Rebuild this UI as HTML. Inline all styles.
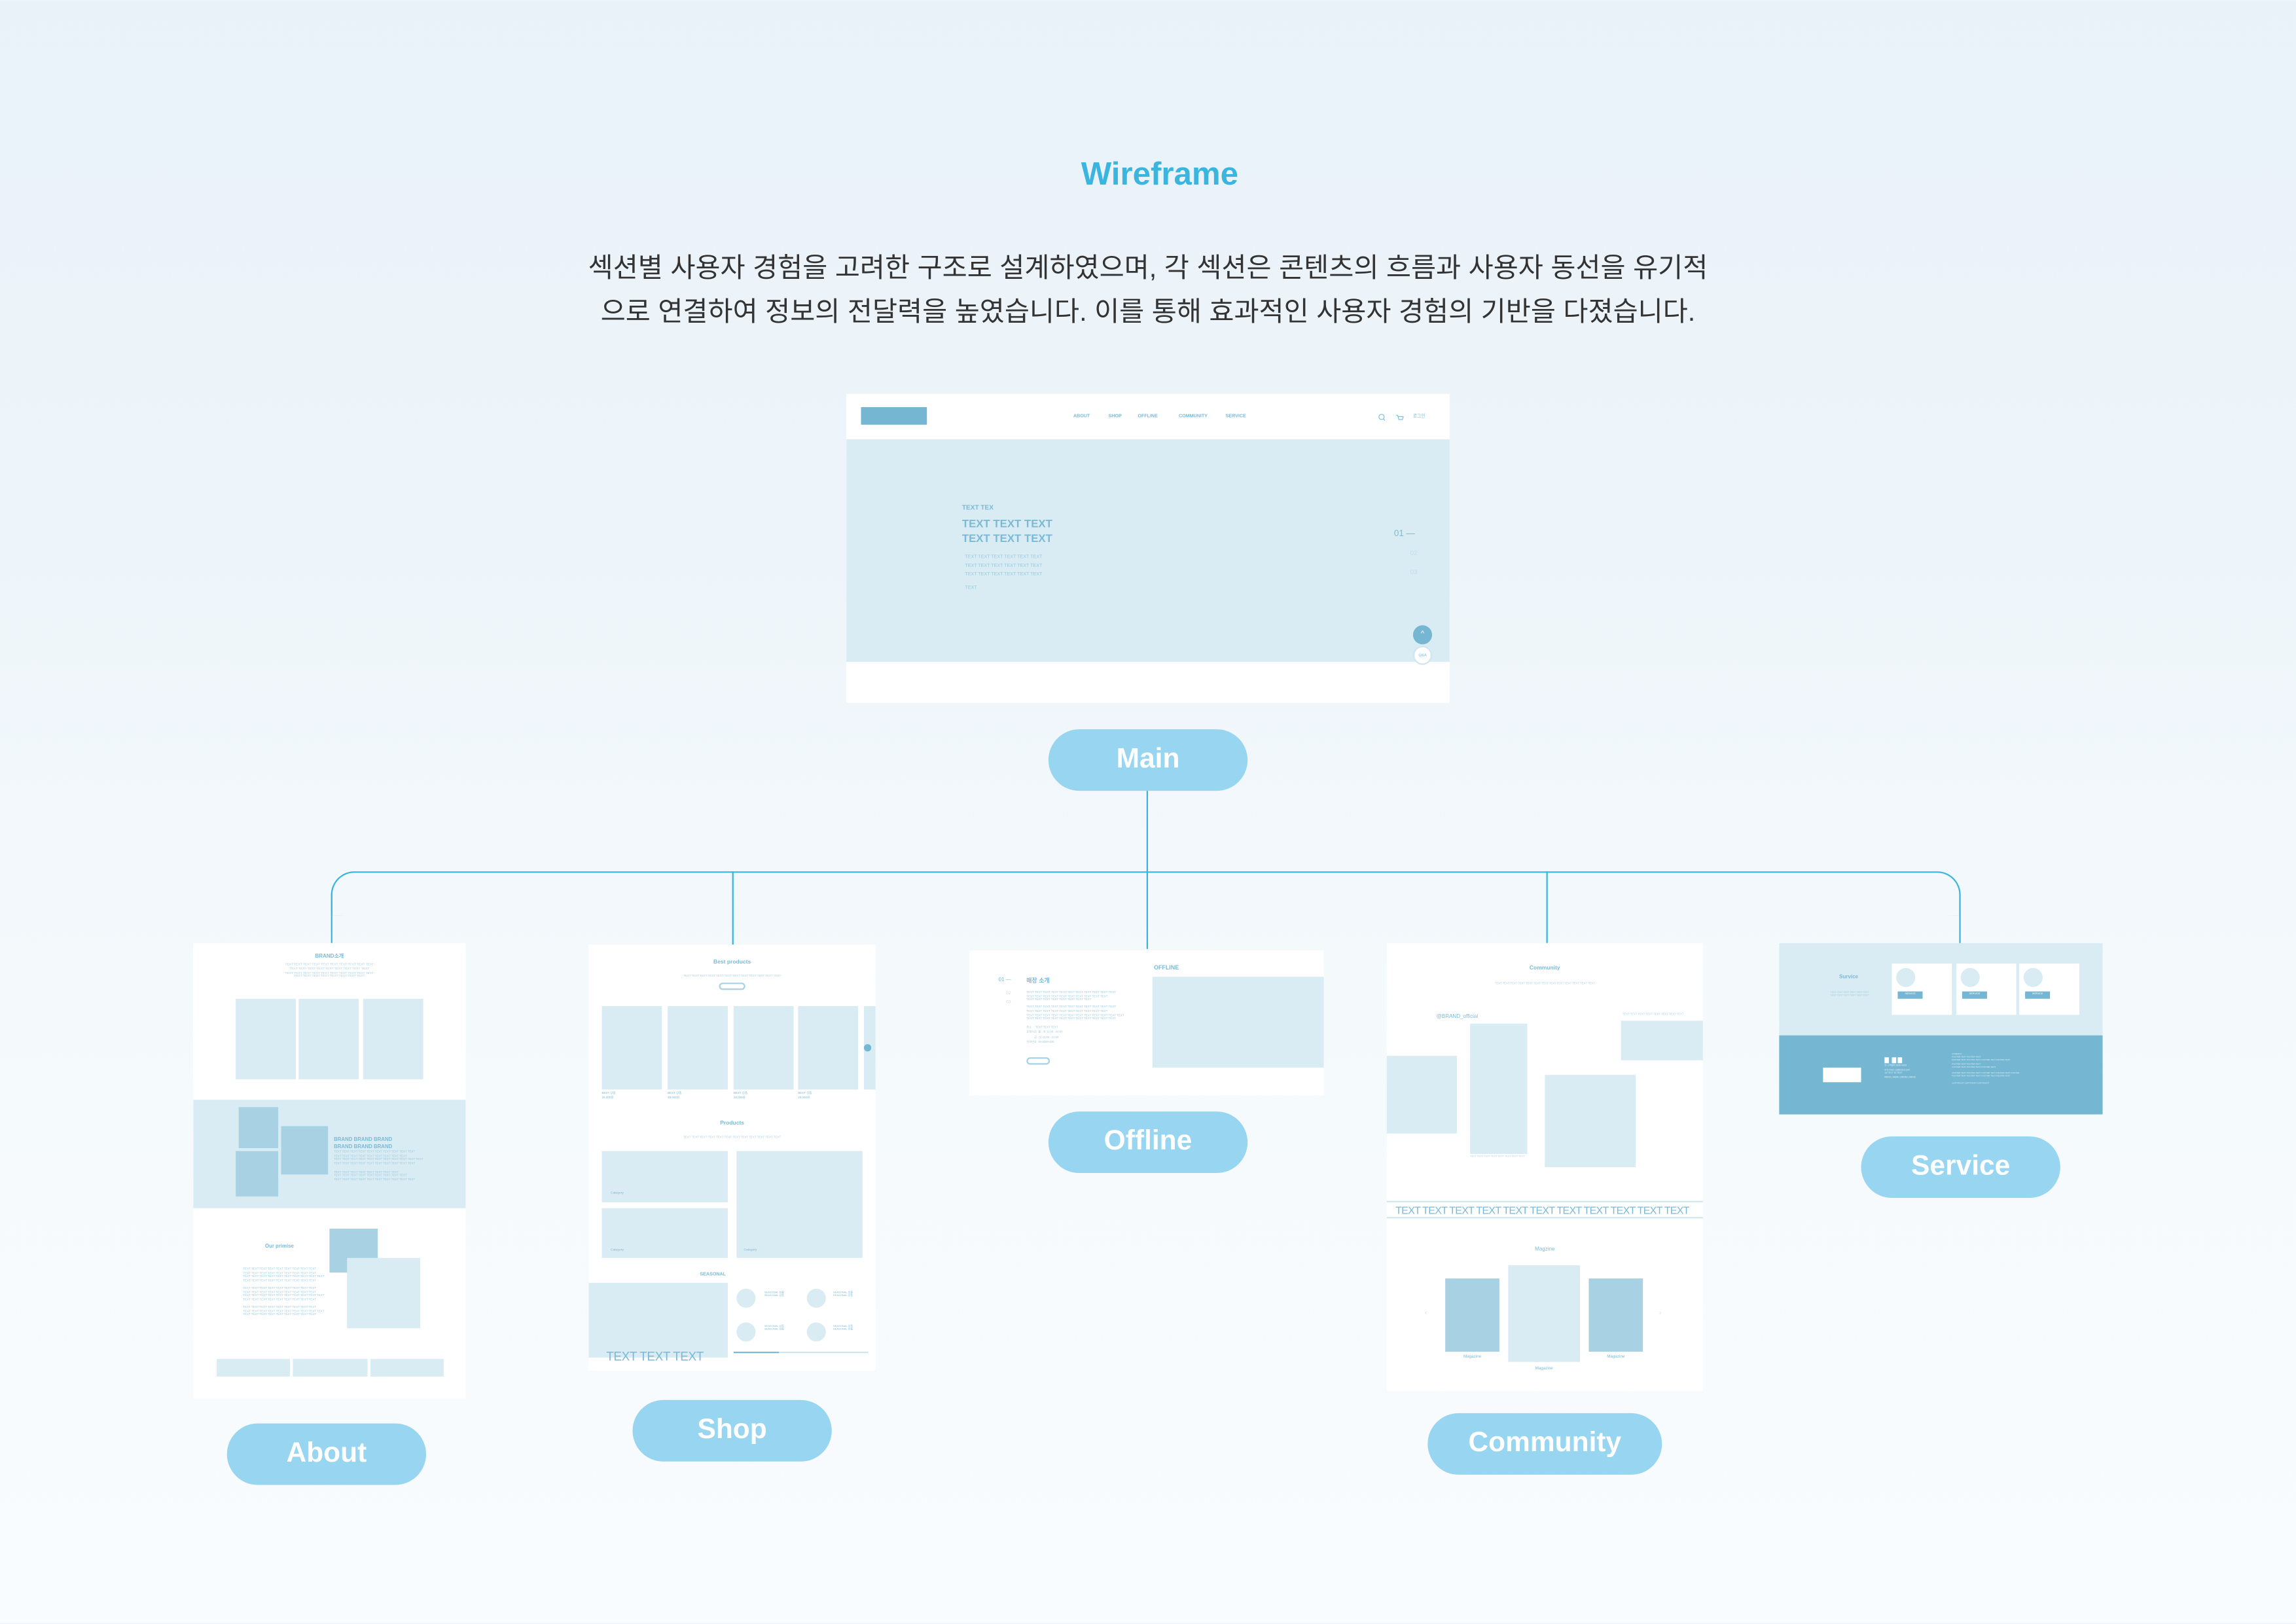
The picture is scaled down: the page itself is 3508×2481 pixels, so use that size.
<!DOCTYPE html>
<html><head><meta charset="utf-8">
<style>
html,body{margin:0;padding:0;}
body{width:3508px;height:2480px;overflow:hidden;background:linear-gradient(180deg,#e9f2f9 0%,#eef5fa 35%,#f4f9fc 60%,#f9fcfe 100%);}
#w{position:absolute;left:0;top:0;width:1568px;height:1109px;transform:scale(2.23724);transform-origin:0 0;font-family:"Liberation Sans","Noto Sans CJK KR",sans-serif;}
.a{position:absolute;}
.f{position:absolute;background:#fff;overflow:hidden;}
.lb{background:#d9ebf3;position:absolute;}
.db{background:#a8d1e3;position:absolute;}
.t{position:absolute;color:#7bbad6;white-space:nowrap;line-height:1;}
.btn{position:absolute;background:#97d5f0;border-radius:30px;color:#fff;font-size:19px;font-weight:bold;display:flex;align-items:center;justify-content:center;font-family:"Liberation Sans",sans-serif;}
.ln{position:absolute;background:#3ab5de;}
</style></head><body><div id="w">

<div class="a" style="left:0;width:1568px;top:106px;text-align:center;font-size:22px;font-weight:bold;color:#3ab5de;padding-left:16px;box-sizing:border-box">Wireframe</div>
<div class="a" style="left:0;width:1568px;top:168px;text-align:center;font-size:18.5px;line-height:30px;color:#333;font-family:'Liberation Sans','Noto Sans CJK KR',sans-serif">섹션별 사용자 경험을 고려한 구조로 설계하였으며, 각 섹션은 콘텐츠의 흐름과 사용자 동선을 유기적<br>으로 연결하여 정보의 전달력을 높였습니다. 이를 통해 효과적인 사용자 경험의 기반을 다졌습니다.</div>

<!-- connector lines -->
<div class="ln" style="left:782.5px;top:540px;width:1.3px;height:108px"></div>
<div class="a" style="left:225.5px;top:594.5px;width:1113px;height:30px;border:1.3px solid #3ab5de;border-bottom:none;border-radius:16px 16px 0 0;box-sizing:border-box"></div>
<div class="ln" style="left:225.5px;top:610px;width:1.3px;height:34px"></div>
<div class="ln" style="left:1337.5px;top:610px;width:1.3px;height:34px"></div>
<div class="ln" style="left:499.5px;top:595px;width:1.3px;height:52px"></div>
<div class="ln" style="left:1055.5px;top:595px;width:1.3px;height:49px"></div>

<!-- MAIN -->
<div class="f" style="left:578px;top:269px;width:412px;height:211px">
  <div class="a" style="left:10px;top:9px;width:45px;height:12px;background:#75b6d2"></div>
  <div class="t" style="left:155px;top:13.5px;font-size:3.2px;font-weight:bold">ABOUT</div>
  <div class="t" style="left:179px;top:13.5px;font-size:3.2px;font-weight:bold">SHOP</div>
  <div class="t" style="left:199px;top:13.5px;font-size:3.2px;font-weight:bold">OFFLINE</div>
  <div class="t" style="left:227px;top:13.5px;font-size:3.2px;font-weight:bold">COMMUNITY</div>
  <div class="t" style="left:259px;top:13.5px;font-size:3.2px;font-weight:bold">SERVICE</div>
  <svg class="a" style="left:363px;top:13px" width="20" height="7" viewBox="0 0 20 7"><circle cx="2.5" cy="2.7" r="1.8" fill="none" stroke="#7bbad6" stroke-width=".5"/><path d="M3.8 4 L4.8 5.2" stroke="#7bbad6" stroke-width=".5"/><path d="M12.5 1.5h1l.8 3h2.5l.5-2h-3.5" fill="none" stroke="#7bbad6" stroke-width=".5"/></svg>
  <div class="t" style="left:387px;top:14px;font-size:3px">로그인</div>
  <div class="lb" style="left:0;top:31px;width:412px;height:152px">
    <div class="t" style="left:79px;top:45px;font-size:4.5px;font-weight:bold">TEXT TEX</div>
    <div class="t" style="left:79px;top:53px;font-size:7.5px;font-weight:bold;line-height:9.5px">TEXT TEXT TEXT<br>TEXT TEXT TEXT</div>
    <div class="t" style="left:81px;top:77px;font-size:3.2px;line-height:6px;color:#9ccbe0">TEXT TEXT TEXT TEXT TEXT TEXT<br>TEXT TEXT TEXT TEXT TEXT TEXT<br>TEXT TEXT TEXT TEXT TEXT TEXT</div>
    <div class="t" style="left:81px;top:100px;font-size:3.2px;color:#9ccbe0">TEXT</div>
    <div class="t" style="left:374px;top:62px;font-size:6px;color:#7bbad6">01 —</div>
    <div class="t" style="left:385px;top:76px;font-size:4.5px;color:#c0dfeb">02</div>
    <div class="t" style="left:385px;top:89px;font-size:4.5px;color:#c0dfeb">03</div>
    <div class="a" style="left:387px;top:127px;width:13px;height:13px;border-radius:50%;background:#75b6d2;color:#fff;font-size:5px;text-align:center;line-height:13px">^</div>
  </div>
  <div class="a" style="left:387px;top:172px;width:13px;height:13px;border-radius:50%;background:#fff;border:.4px solid #cfe6f0;box-sizing:border-box;color:#7bbad6;font-size:2.6px;text-align:center;line-height:12px">Q&amp;A</div>
</div>
<div class="btn" style="left:716px;top:498px;width:136px;height:42px">Main</div>

<!-- ABOUT -->
<div class="f" style="left:132px;top:644px;width:186px;height:311px">
  <div class="t" style="left:0;width:186px;text-align:center;top:8px;font-size:3.6px;font-weight:bold">BRAND소개</div>
  <div class="t" style="left:0;width:186px;text-align:center;top:14px;font-size:2.2px;line-height:2.8px;color:#a8d1e3">TEXT TEXT TEXT TEXT TEXT TEXT TEXT TEXT TEXT TEXT<br>TEXT TEXT TEXT TEXT TEXT TEXT TEXT TEXT TEXT<br>TEXT TEXT TEXT TEXT TEXT TEXT TEXT TEXT TEXT TEXT<br>TEXT TEXT TEXT TEXT TEXT TEXT TEXT TEXT</div>
  <div class="lb" style="left:29px;top:38px;width:41px;height:55px"></div>
  <div class="lb" style="left:72px;top:38px;width:41px;height:55px"></div>
  <div class="lb" style="left:116px;top:38px;width:41px;height:55px"></div>
  <div class="lb" style="left:0;top:107px;width:186px;height:74px">
    <div class="db" style="left:31px;top:5px;width:27px;height:28px"></div>
    <div class="db" style="left:60px;top:18px;width:32px;height:33px"></div>
    <div class="db" style="left:29px;top:35px;width:29px;height:31px"></div>
    <div class="t" style="left:96px;top:25px;font-size:3.5px;line-height:4.5px;font-weight:bold">BRAND BRAND BRAND<br>BRAND BRAND BRAND</div>
    <div class="t" style="left:96px;top:35px;font-size:2px;line-height:2.7px;color:#9ccbe0">TEXT TEXT TEXT TEXT TEXT TEXT TEXT TEXT TEXT TEXT<br>TEXT TEXT TEXT TEXT TEXT TEXT TEXT TEXT TEXT<br>TEXT TEXT TEXT TEXT TEXT TEXT TEXT TEXT TEXT TEXT TEXT<br>TEXT TEXT TEXT TEXT TEXT TEXT TEXT TEXT TEXT TEXT<br><br>TEXT TEXT TEXT TEXT TEXT TEXT TEXT TEXT<br>TEXT TEXT TEXT TEXT TEXT TEXT TEXT TEXT TEXT<br>TEXT TEXT TEXT TEXT TEXT TEXT TEXT TEXT TEXT TEXT</div>
  </div>
  <div class="db" style="left:93px;top:195px;width:33px;height:30px"></div>
  <div class="lb" style="left:105px;top:215px;width:50px;height:48px"></div>
  <div class="t" style="left:49px;top:206px;font-size:3.5px;font-weight:bold">Our primise</div>
  <div class="t" style="left:34px;top:222px;font-size:2px;line-height:2.6px;color:#9ccbe0">TEXT TEXT TEXT TEXT TEXT TEXT TEXT TEXT TEXT<br>TEXT TEXT TEXT TEXT TEXT TEXT TEXT TEXT TEXT<br>TEXT TEXT TEXT TEXT TEXT TEXT TEXT TEXT TEXT TEXT<br>TEXT TEXT TEXT TEXT TEXT TEXT TEXT TEXT TEXT<br><br>TEXT TEXT TEXT TEXT TEXT TEXT TEXT TEXT TEXT<br>TEXT TEXT TEXT TEXT TEXT TEXT TEXT TEXT TEXT<br>TEXT TEXT TEXT TEXT TEXT TEXT TEXT TEXT TEXT TEXT<br>TEXT TEXT TEXT TEXT TEXT TEXT TEXT TEXT TEXT<br><br>TEXT TEXT TEXT TEXT TEXT TEXT TEXT TEXT TEXT<br>TEXT TEXT TEXT TEXT TEXT TEXT TEXT TEXT TEXT TEXT<br>TEXT TEXT TEXT TEXT TEXT TEXT TEXT TEXT TEXT</div>
  <div class="lb" style="left:16px;top:284px;width:50px;height:12px"></div>
  <div class="lb" style="left:68px;top:284px;width:51px;height:12px"></div>
  <div class="lb" style="left:121px;top:284px;width:50px;height:12px"></div>
</div>
<div class="btn" style="left:155px;top:972px;width:136px;height:42px">About</div>

<!-- SHOP -->
<div class="f" style="left:402px;top:645px;width:196px;height:291px">
  <div class="t" style="left:0;width:196px;text-align:center;top:11px;font-size:3.8px;font-weight:bold">Best products</div>
  <div class="t" style="left:0;width:196px;text-align:center;top:21px;font-size:2px;color:#a8d1e3">TEXT TEXT TEXT TEXT TEXT TEXT TEXT TEXT TEXT TEXT TEXT TEXT</div>
  <div class="a" style="left:89px;top:26px;width:18px;height:5px;border:.4px solid #a8d1e3;border-radius:3px;box-sizing:border-box"></div>
  <div class="lb" style="left:9px;top:42px;width:41px;height:57px"></div>
  <div class="lb" style="left:54px;top:42px;width:41px;height:57px"></div>
  <div class="lb" style="left:99px;top:42px;width:41px;height:57px"></div>
  <div class="lb" style="left:143px;top:42px;width:41px;height:57px"></div>
  <div class="lb" style="left:188px;top:42px;width:8px;height:57px"></div>
  <div class="a" style="left:188px;top:68px;width:5px;height:5px;border-radius:50%;background:#75b6d2"></div>
  <div class="t" style="left:9px;top:101px;font-size:2px;line-height:2.8px">BEST 상품<br>29,000원</div>
  <div class="t" style="left:54px;top:101px;font-size:2px;line-height:2.8px">BEST 상품<br>29,000원</div>
  <div class="t" style="left:99px;top:101px;font-size:2px;line-height:2.8px">BEST 상품<br>29,000원</div>
  <div class="t" style="left:143px;top:101px;font-size:2px;line-height:2.8px">BEST 상품<br>29,000원</div>
  <div class="t" style="left:0;width:196px;text-align:center;top:121px;font-size:3.8px;font-weight:bold">Products</div>
  <div class="t" style="left:0;width:196px;text-align:center;top:131px;font-size:2px;color:#a8d1e3">TEXT TEXT TEXT TEXT TEXT TEXT TEXT TEXT TEXT TEXT TEXT TEXT</div>
  <div class="lb" style="left:9px;top:141px;width:86px;height:35px"></div>
  <div class="lb" style="left:9px;top:180px;width:86px;height:34px"></div>
  <div class="lb" style="left:101px;top:141px;width:86px;height:73px"></div>
  <div class="t" style="left:15px;top:169px;font-size:2.2px">Category</div>
  <div class="t" style="left:15px;top:208px;font-size:2.2px">Category</div>
  <div class="t" style="left:106px;top:208px;font-size:2.2px">Category</div>
  <div class="t" style="left:76px;top:224px;font-size:3.2px;font-weight:bold">SEASONAL</div>
  <div class="lb" style="left:0;top:231px;width:95px;height:51px"></div>
  <div class="lb" style="left:101px;top:235px;width:13px;height:13px;border-radius:50%"></div>
  <div class="lb" style="left:149px;top:235px;width:13px;height:13px;border-radius:50%"></div>
  <div class="lb" style="left:101px;top:258px;width:13px;height:13px;border-radius:50%"></div>
  <div class="lb" style="left:149px;top:258px;width:13px;height:13px;border-radius:50%"></div>
  <div class="t" style="left:120px;top:237px;font-size:1.8px;line-height:2.4px">SEASONAL 상품<br>SEASONAL 상품</div>
  <div class="t" style="left:167px;top:237px;font-size:1.8px;line-height:2.4px">SEASONAL 상품<br>SEASONAL 상품</div>
  <div class="t" style="left:120px;top:260px;font-size:1.8px;line-height:2.4px">SEASONAL 상품<br>SEASONAL 상품</div>
  <div class="t" style="left:167px;top:260px;font-size:1.8px;line-height:2.4px">SEASONAL 상품<br>SEASONAL 상품</div>
  <div class="a" style="left:99px;top:278px;width:92px;height:.5px;background:#cfe6f0"></div>
  <div class="a" style="left:99px;top:277.8px;width:31px;height:.8px;background:#7bbad6"></div>
  <div class="t" style="left:12px;top:277px;font-size:8.5px;color:#7bbad6;letter-spacing:-.2px">TEXT TEXT TEXT</div>
</div>
<div class="btn" style="left:432px;top:956px;width:136px;height:42px">Shop</div>

<!-- OFFLINE -->
<div class="f" style="left:662px;top:649px;width:242px;height:99px">
  <div class="t" style="left:126px;top:10px;font-size:4px;font-weight:bold">OFFLINE</div>
  <div class="lb" style="left:125px;top:18px;width:117px;height:62px"></div>
  <div class="t" style="left:20px;top:19px;font-size:3.5px">01 —</div>
  <div class="t" style="left:39px;top:19px;font-size:4px;font-weight:bold">매장 소개</div>
  <div class="t" style="left:25px;top:27px;font-size:3px;line-height:5.5px;color:#c0dfeb">02<br>03</div>
  <div class="t" style="left:39px;top:28px;font-size:2px;line-height:2.6px;color:#9ccbe0">TEXT TEXT TEXT TEXT TEXT TEXT TEXT TEXT TEXT TEXT TEXT<br>TEXT TEXT TEXT TEXT TEXT TEXT TEXT TEXT TEXT TEXT<br>TEXT TEXT TEXT TEXT TEXT TEXT TEXT TEXT<br><br>TEXT TEXT TEXT TEXT TEXT TEXT TEXT TEXT TEXT TEXT TEXT<br>TEXT TEXT TEXT TEXT TEXT TEXT TEXT TEXT TEXT TEXT<br>TEXT TEXT TEXT TEXT TEXT TEXT TEXT TEXT TEXT TEXT TEXT TEXT<br>TEXT TEXT TEXT TEXT TEXT TEXT TEXT TEXT TEXT TEXT TEXT</div>
  <div class="t" style="left:39px;top:52px;font-size:1.9px;line-height:3.4px;color:#9ccbe0">주소 &nbsp;&nbsp;&nbsp; TEXT TEXT TEXT<br>운영시간 &nbsp;월 - 목 11:00 - 20:00<br>&nbsp;&nbsp;&nbsp;&nbsp;&nbsp;&nbsp;&nbsp;&nbsp;&nbsp; 금 - 일 11:00 - 21:00<br>전화번호 &nbsp;00-0000-000</div>
  <div class="a" style="left:39px;top:73px;width:16px;height:5px;border:.4px solid #a8d1e3;border-radius:3px;box-sizing:border-box"></div>
</div>
<div class="btn" style="left:716px;top:759px;width:136px;height:42px">Offline</div>

<!-- COMMUNITY -->
<div class="f" style="left:947px;top:644px;width:216px;height:306px">
  <div class="t" style="left:0;width:216px;text-align:center;top:16px;font-size:3.8px;font-weight:bold">Community</div>
  <div class="t" style="left:0;width:216px;text-align:center;top:28px;font-size:1.9px;color:#a8d1e3">TEXT TEXT TEXT TEXT TEXT TEXT TEXT TEXT TEXT TEXT TEXT TEXT TEXT</div>
  <div class="t" style="left:34px;top:49px;font-size:3.6px">@BRAND_official</div>
  <div class="t" style="left:161px;top:49px;font-size:1.9px;color:#a8d1e3">TEXT TEXT TEXT TEXT TEXT TEXT TEXT TEXT</div>
  <div class="lb" style="left:0;top:77px;width:48px;height:53px"></div>
  <div class="lb" style="left:57px;top:55px;width:39px;height:89px"></div>
  <div class="t" style="left:57px;top:146px;font-size:1.7px;color:#a8d1e3">TEXT TEXT TEXT TEXT TEXT TEXT TEXT TEXT</div>
  <div class="lb" style="left:108px;top:90px;width:62px;height:63px"></div>
  <div class="lb" style="left:160px;top:53px;width:56px;height:27px"></div>
  <div class="a" style="left:0;top:176px;width:216px;height:12px;border-top:.5px solid #cfe6f0;border-bottom:.5px solid #cfe6f0;box-sizing:border-box"></div>
  <div class="t" style="left:6px;top:178.8px;font-size:7.2px;color:#7bbad6;letter-spacing:-.35px">TEXT TEXT TEXT TEXT TEXT TEXT TEXT TEXT TEXT TEXT TEXT</div>
  <div class="t" style="left:0;width:216px;text-align:center;top:208px;font-size:3.6px">Magzine</div>
  <div class="db" style="left:40px;top:229px;width:37px;height:50px"></div>
  <div class="lb" style="left:83px;top:220px;width:49px;height:66px"></div>
  <div class="db" style="left:138px;top:229px;width:37px;height:50px"></div>
  <div class="t" style="left:40px;width:37px;text-align:center;top:281px;font-size:2.8px">Magazine</div>
  <div class="t" style="left:83px;width:49px;text-align:center;top:289px;font-size:2.8px">Magazine</div>
  <div class="t" style="left:138px;width:37px;text-align:center;top:281px;font-size:2.8px">Magazine</div>
  <div class="t" style="left:26px;top:251px;font-size:5px;color:#cfe6f0">‹</div>
  <div class="t" style="left:186px;top:251px;font-size:5px;color:#cfe6f0">›</div>
</div>
<div class="btn" style="left:975px;top:965px;width:160px;height:42px">Community</div>

<!-- SERVICE -->
<div class="a" style="left:1215px;top:644px;width:221px;height:117px;overflow:hidden">
  <div class="lb" style="left:0;top:0;width:221px;height:63px">
    <div class="t" style="left:41px;top:22px;font-size:3.6px;font-weight:bold">Survice</div>
    <div class="t" style="left:35px;top:34px;font-size:1.6px;line-height:2.2px;color:#9ccbe0">TEXT TEXT TEXT TEXT TEXT TEXT<br>TEXT TEXT TEXT TEXT TEXT TEXT</div>
    <div class="a" style="left:77px;top:14px;width:41px;height:35px;background:#fff">
      <div class="lb" style="left:3px;top:3px;width:13px;height:13px;border-radius:50%"></div>
      <div class="a" style="left:4px;top:19px;width:17px;height:5px;background:#75b6d2;color:#fff;font-size:1.7px;text-align:center;line-height:5px">SERVICE</div>
    </div>
    <div class="a" style="left:121px;top:14px;width:41px;height:35px;background:#fff">
      <div class="lb" style="left:3px;top:3px;width:13px;height:13px;border-radius:50%"></div>
      <div class="a" style="left:4px;top:19px;width:17px;height:5px;background:#75b6d2;color:#fff;font-size:1.7px;text-align:center;line-height:5px">SERVICE</div>
    </div>
    <div class="a" style="left:164px;top:14px;width:41px;height:35px;background:#fff">
      <div class="lb" style="left:3px;top:3px;width:13px;height:13px;border-radius:50%"></div>
      <div class="a" style="left:4px;top:19px;width:17px;height:5px;background:#75b6d2;color:#fff;font-size:1.7px;text-align:center;line-height:5px">SERVICE</div>
    </div>
  </div>
  <div class="a" style="left:0;top:63px;width:221px;height:54px;background:#75b6d2">
    <div class="a" style="left:30px;top:22px;width:26px;height:10px;background:#fff"></div>
    <div class="a" style="left:72px;top:15px;width:3px;height:3.5px;background:#fff"></div>
    <div class="a" style="left:76.5px;top:15px;width:3px;height:3.5px;background:#fff"></div>
    <div class="a" style="left:81px;top:15px;width:3px;height:3.5px;background:#fff"></div>
    <div class="t" style="left:72px;top:21px;font-size:1.5px;line-height:2.6px;color:#e2f1f8">☏ 고객센터 0000-0000<br>✉ E-mail | cs@brand.com<br>15 TEXT 15 TEXT<br>MENU | MENU | MENU | MENU</div>
    <div class="t" style="left:118px;top:13px;font-size:1.4px;line-height:2.2px;color:#e2f1f8">COMPANY<br>FOOTER TEXT FOOTER TEXT<br>FOOTER TEXT FOOTER TEXT FOOTER TEXT FOOTER TEXT<br>FOOTER TEXT FOOTER TEXT<br>FOOTER TEXT FOOTER TEXT FOOTER TEXT<br><br>FOOTER TEXT FOOTER TEXT FOOTER TEXT FOOTER TEXT FOOTER<br>FOOTER TEXT FOOTER TEXT FOOTER TEXT FOOTER TEXT<br><br>COPYRIGHT COPYRIGHT COPYRIGHT</div>
  </div>
</div>
<div class="btn" style="left:1271px;top:776px;width:136px;height:42px">Service</div>

</div></body></html>
